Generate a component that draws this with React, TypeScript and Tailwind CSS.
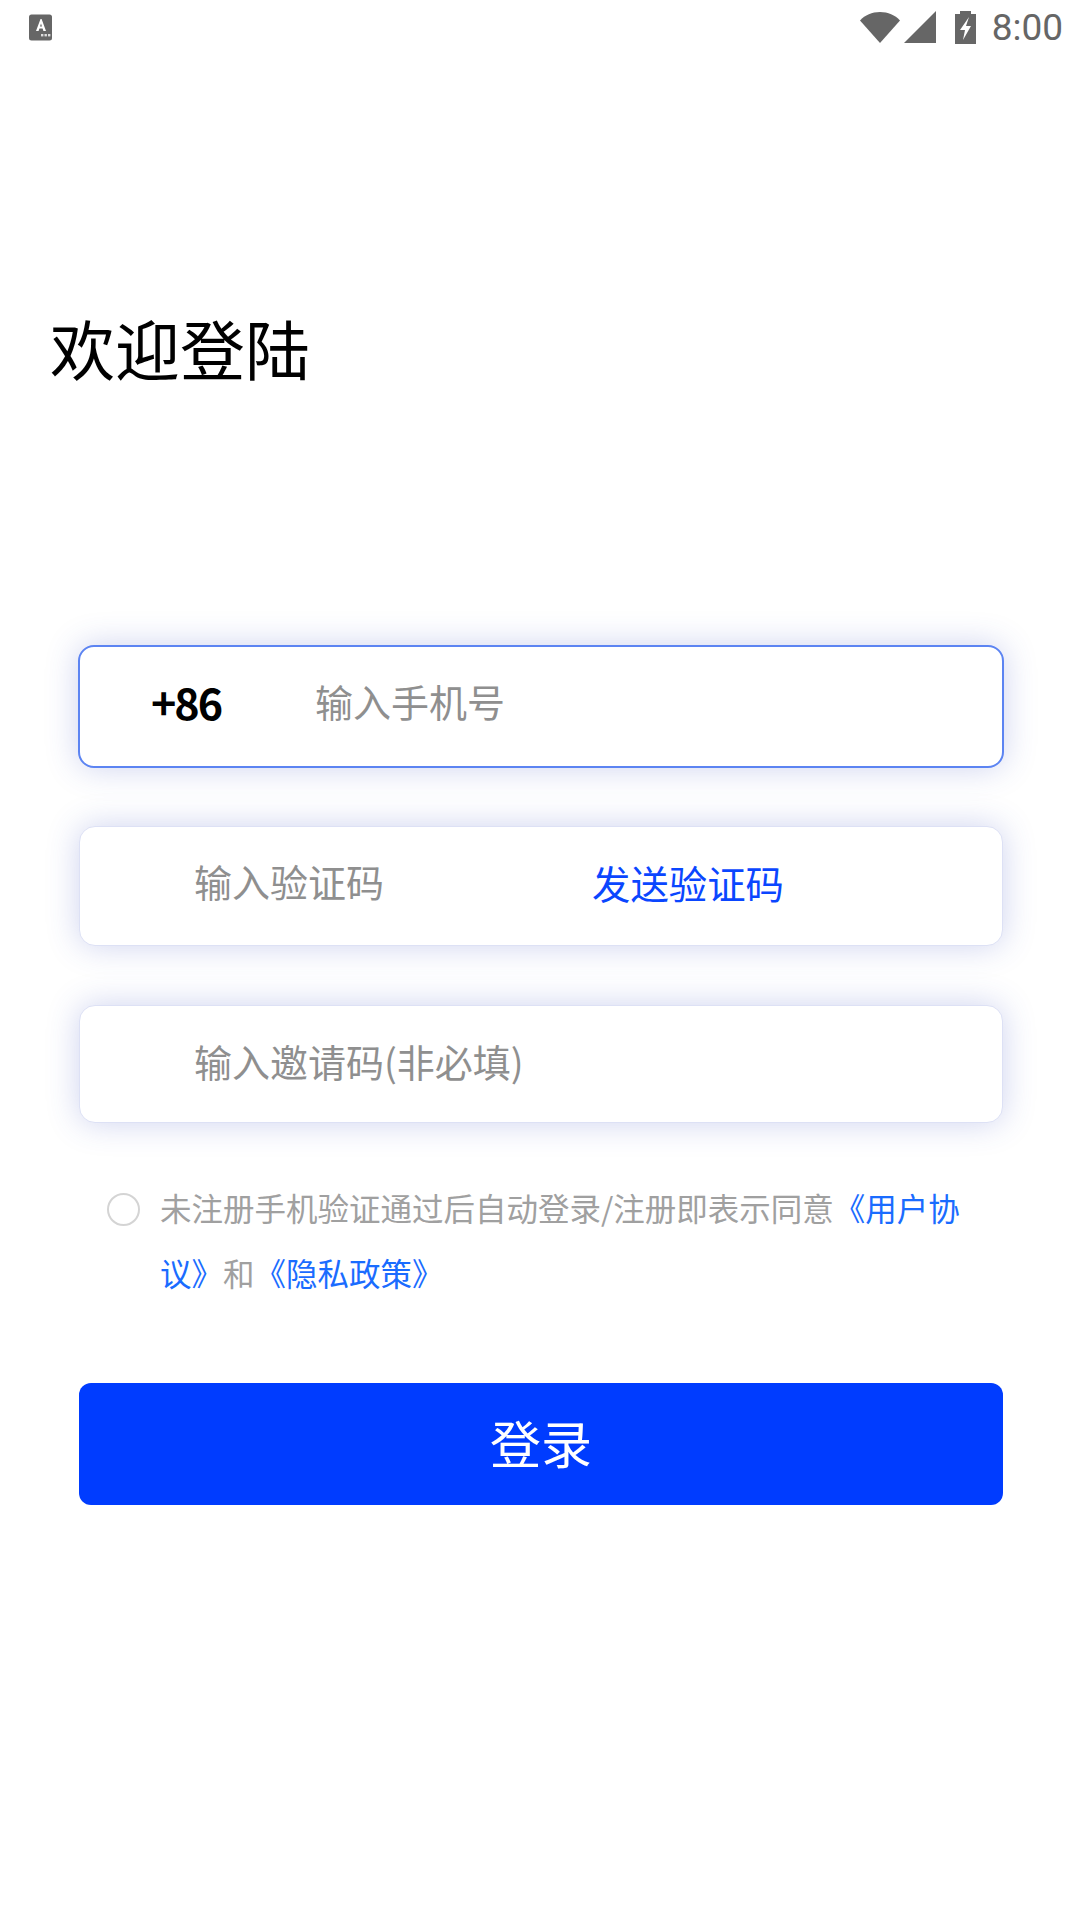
const cjk = "font-['Noto_Sans_CJK_SC','Noto_Sans',sans-serif]"

function StatusBar() {
  return (
    <div className="flex h-[54px] items-center justify-between pl-[29px] pr-[17px]">
      <svg width="24" height="27" viewBox="0 0 24 27">
        <rect width="23" height="26" y="0.5" rx="2.5" fill="#666" />
        <path d="M11.5 5 7 17h2.6l.8-2.4h3.2l.8 2.4H17L12.6 5zM11 12.6l1-3.2 1 3.2z" fill="#fff" />
        <rect x="12" y="20" width="2.4" height="2.4" fill="#ddd" />
        <rect x="15.5" y="20" width="2.4" height="2.4" fill="#ddd" />
        <rect x="19" y="20" width="2.4" height="2.4" fill="#ddd" />
      </svg>
      <div className="flex items-center">
        <svg width="40" height="32" viewBox="0 0 40 32" className="mr-[4px]">
          <path d="M0 9.5C5 4 12 1 20 1s15 3 20 8.5L20 32z" fill="#666" />
        </svg>
        <svg width="32" height="32" viewBox="0 0 32 32" className="mr-[19px]">
          <path d="M0 32 32 0v32z" fill="#666" />
        </svg>
        <svg width="21" height="33" viewBox="0 0 21 33" className="mr-[16px]">
          <path d="M5 0h11v3h5v30H0V3h5z" fill="#666" />
          <path d="M14 6 5 19h5l-2 10 8-14h-5z" fill="#fff" />
        </svg>
        <span className="font-['Roboto',sans-serif] text-[37px] leading-none text-[#666]">8:00</span>
      </div>
    </div>
  )
}

function Field({ active, height, children }: { active?: boolean; height: string; children: React.ReactNode }) {
  return (
    <div
      className={`flex items-center rounded-[16px] border bg-white shadow-[0_0_32px_rgba(60,80,190,0.25)] ${height} ${
        active ? 'mx-[-1px] border-[2px] border-[#5c84f2]' : 'border-[#dde1f5]'
      }`}
    >
      {children}
    </div>
  )
}

export default function App() {
  return (
    <div className={`h-[1920px] w-[1080px] overflow-hidden bg-white ${cjk}`}>
      <StatusBar />

      <h1 className="ml-[50px] mt-[248px] text-[65px] font-normal leading-[90px] text-black">欢迎登陆</h1>

      <div className="ml-[79px] mt-[253px] flex w-[924px] flex-col">
        <Field active height="h-[123px]">
          <span className="mb-[10px] ml-[71px] w-[164px] text-[43px] font-semibold tracking-[-2px] text-black">+86</span>
          <span className="mb-[12px] text-[38px] text-[#8f8f8f]">输入手机号</span>
        </Field>
        <div className="mt-[58px]">
          <Field height="h-[120px]">
            <span className="mb-[12px] ml-[114px] w-[398px] text-[38px] text-[#8f8f8f]">输入验证码</span>
            <span className="mb-[6px] text-[38.4px] text-[#0a46ff]">发送验证码</span>
          </Field>
        </div>
        <div className="mt-[59px]">
          <Field height="h-[118px]">
            <span className="mb-[8px] ml-[114px] text-[38px] text-[#8f8f8f]">输入邀请码(非必填)</span>
          </Field>
        </div>

        <div className="mt-[52px] flex items-start pl-[28px]">
          <div className="mt-[18px] h-[33px] w-[33px] shrink-0 rounded-full border-2 border-[#d4d4d4]" />
          <p className="ml-[20px] w-[805px] text-[31.5px] leading-[65px] text-[#a0a0a0]">
            未注册手机验证通过后自动登录/注册即表示同意
            <span className="text-[#1a6cff]">《用户协议》</span>和<span className="text-[#1a6cff]">《隐私政策》</span>
          </p>
        </div>

        <button className="mt-[78px] flex h-[122px] items-center justify-center rounded-[12px] bg-[#003cff] pb-[3px] text-[51px] text-white">
          登录
        </button>
      </div>
    </div>
  )
}
